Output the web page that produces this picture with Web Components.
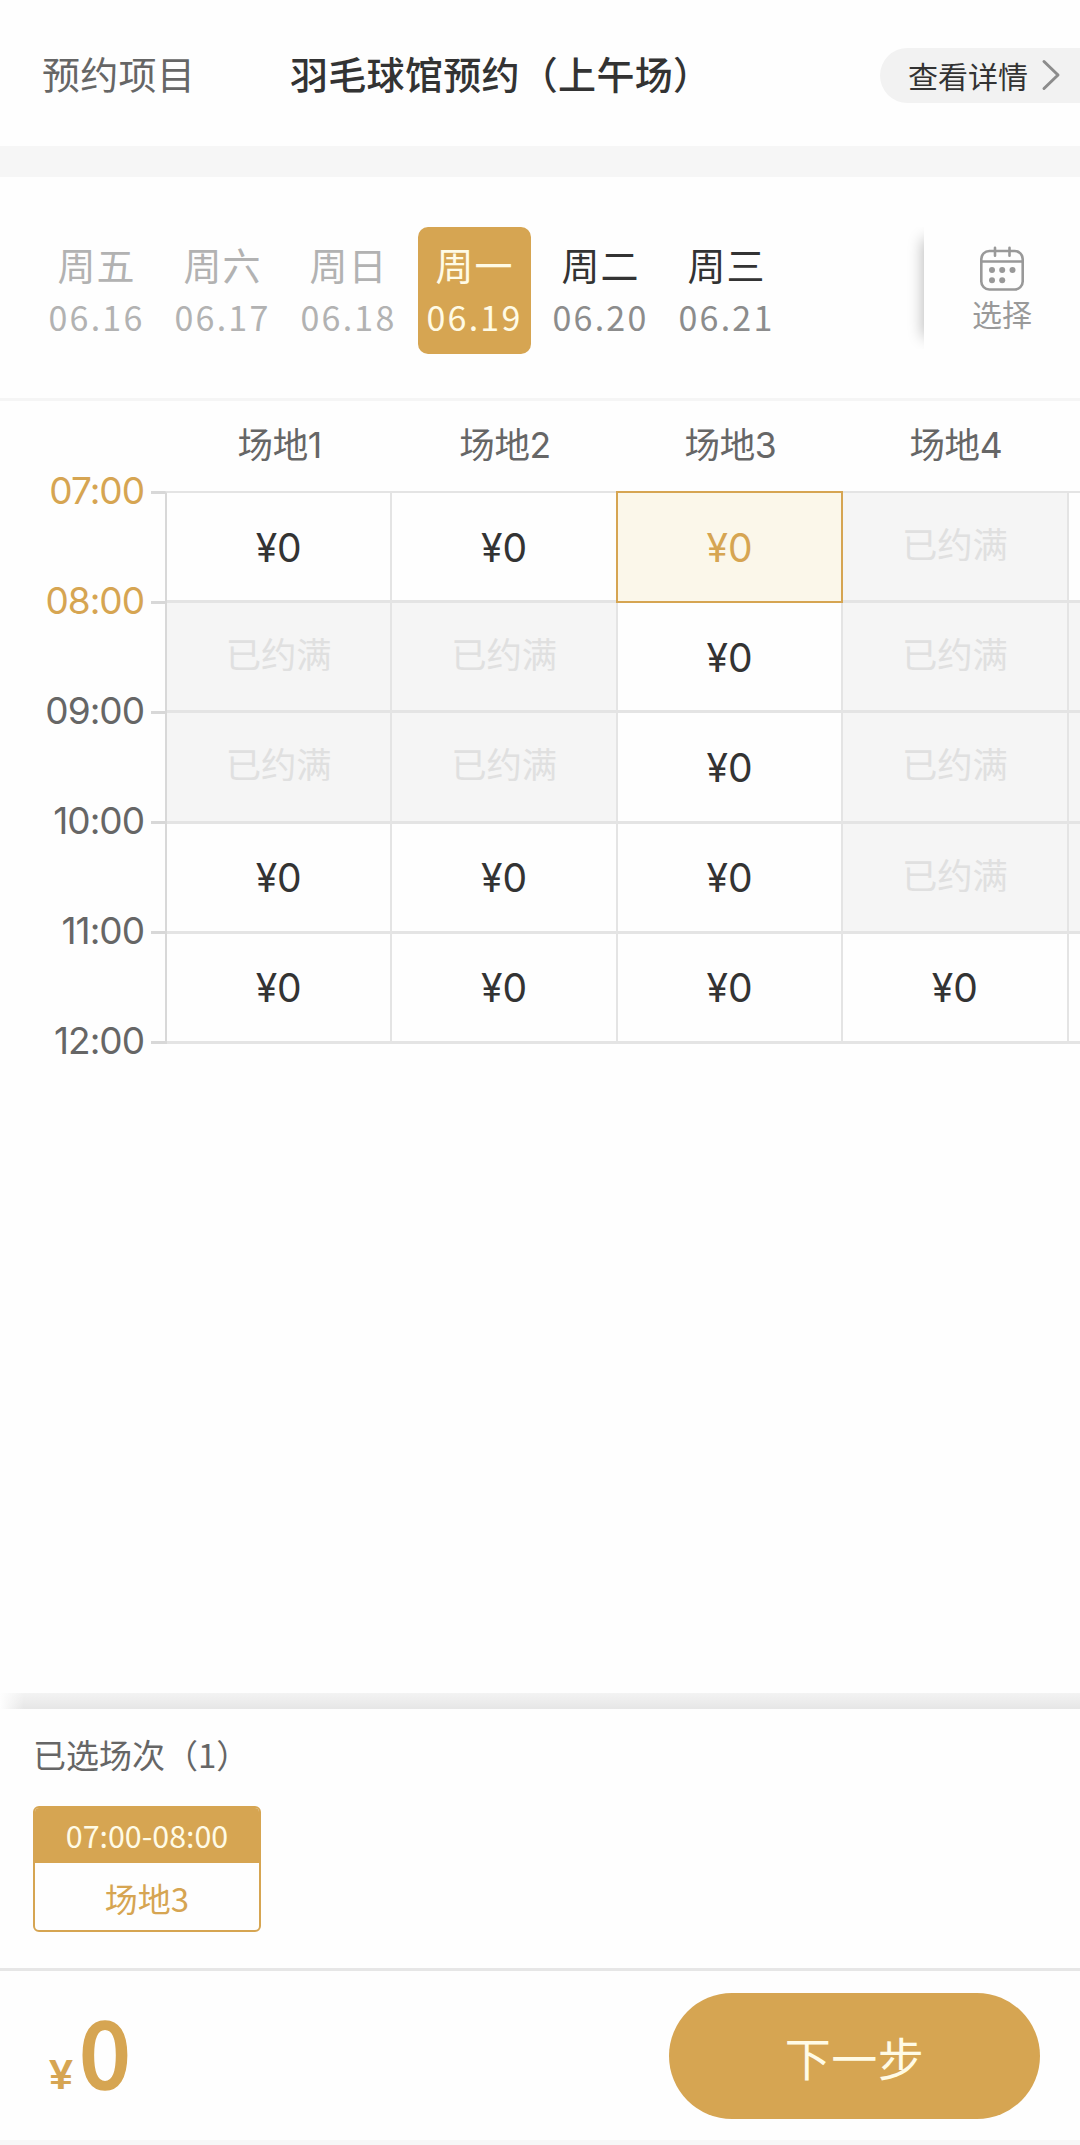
<!DOCTYPE html>
<html lang="zh-CN">
<head>
<meta charset="utf-8">
<title>羽毛球馆预约</title>
<style>
    :root{
        --gold: #d6a552;
        --line: #e4e4e4;
        --tick: #d8d8d8;
        --full: #f5f5f5;
    }
    body{
        margin: 0;
        width: 1080px;
        height: 2145px;
        overflow: hidden;
        background: #fefefe;
        font-family: "Noto Sans CJK SC", "Noto Sans", sans-serif;
        color: #333;
    }
</style>
</head>
<body>
<booking-page>
    <booking-header slot="header" label="预约项目" link="查看详情">羽毛球馆预约（上午场）</booking-header>
    <date-strip slot="dates">
        <date-tab day="周五" date="06.16" past></date-tab>
        <date-tab day="周六" date="06.17" past></date-tab>
        <date-tab day="周日" date="06.18" past></date-tab>
        <date-tab day="周一" date="06.19" active></date-tab>
        <date-tab day="周二" date="06.20"></date-tab>
        <date-tab day="周三" date="06.21"></date-tab>
    </date-strip>
    <court-grid slot="grid"></court-grid>
    <selected-list slot="footer" label="已选场次（1）">
        <selected-slot time="07:00-08:00">场地3</selected-slot>
    </selected-list>
    <pay-bar slot="footer" amount="0">下一步</pay-bar>
</booking-page>

<script>
class BookingPage extends HTMLElement{
    constructor(){
        super()
        this.attachShadow({mode: 'open'})
        this.shadowRoot.innerHTML = `
            <style>
                :host{
                    display: flex;
                    flex-direction: column;
                    height: 2145px;
                }
                #main{
                    flex: 1;
                }
            </style>
            <slot name="header"></slot>
            <slot name="dates"></slot>
            <div id="main"><slot name="grid"></slot></div>
            <slot name="footer"></slot>
        `
    }
}

class BookingHeader extends HTMLElement{
    constructor(){
        super()
        this.attachShadow({mode: 'open'})
        this.shadowRoot.innerHTML = `
            <style>
                :host{
                    display: flex;
                    align-items: center;
                    box-sizing: border-box;
                    height: 177px;
                    padding: 5px 0 0 42px;
                    border-bottom: 31px solid #f6f6f6;
                    font-size: 38px;
                    letter-spacing: .3px;
                }
                #label, #title{
                    padding-bottom: 6px;
                }
                #label{
                    width: 248px;
                    color: #666;
                }
                #title{
                    flex: 1;
                    font-weight: 500;
                }
                #link{
                    display: flex;
                    align-items: center;
                    box-sizing: border-box;
                    width: 200px;
                    height: 55px;
                    padding-left: 28px;
                    gap: 13px;
                    border-radius: 28px 0 0 28px;
                    background: #f2f2f2;
                    font-size: 30px;
                    letter-spacing: 0;
                }
                #link span, #link svg{
                    margin-bottom: 2px;
                }
            </style>
            <span id="label"></span>
            <span id="title"><slot></slot></span>
            <div id="link">
                <span></span>
                <svg width="20" height="32" viewBox="0 0 20 32" fill="none" stroke="#8c8c8c" stroke-width="3" stroke-linecap="round" stroke-linejoin="round"><path d="M3 2.5 17 16 3 29.5"/></svg>
            </div>
        `
    }
    connectedCallback(){
        this.shadowRoot.querySelector('#label').textContent = this.getAttribute('label')
        this.shadowRoot.querySelector('#link span').textContent = this.getAttribute('link')
    }
}

class DateStrip extends HTMLElement{
    constructor(){
        super()
        this.attachShadow({mode: 'open'})
        this.shadowRoot.innerHTML = `
            <style>
                :host{
                    display: flex;
                    box-sizing: border-box;
                    height: 224px;
                    border-bottom: 3px solid #f5f5f5;
                }
                #tabs{
                    display: flex;
                    flex: 1;
                    gap: 13px;
                    padding: 50px 0 0 40px;
                    overflow: hidden;
                }
                #shade{
                    width: 24px;
                    height: 122px;
                    margin-top: 50px;
                    overflow: hidden;
                }
                #shade i{
                    display: block;
                    width: 30px;
                    height: 96px;
                    margin: 13px 0 0 24px;
                    box-shadow: 0 0 15px 1px rgba(0,0,0,.28);
                }
                #pick{
                    display: flex;
                    flex-direction: column;
                    align-items: center;
                    width: 156px;
                    padding-top: 68px;
                    font-size: 30px;
                    line-height: 40px;
                    color: #999;
                }
            </style>
            <div id="tabs"><slot></slot></div>
            <div id="shade"><i></i></div>
            <div id="pick">
                <svg width="46" height="48" viewBox="0 0 46 48" fill="none" stroke="#999" stroke-width="2.6" stroke-linecap="round">
                    <rect x="2.3" y="6" width="41.4" height="38.5" rx="8"/>
                    <path d="M2.3 16.5h41.4M16 2.7v8M30.5 2.7v8"/>
                    <g fill="#999" stroke="none">
                        <circle cx="13" cy="25" r="3"/><circle cx="23.2" cy="25" r="3"/><circle cx="33.5" cy="25" r="3"/>
                        <circle cx="13" cy="35.3" r="3"/><circle cx="23.2" cy="35.3" r="3"/>
                    </g>
                </svg>
                <span>选择</span>
            </div>
        `
    }
}

class DateTab extends HTMLElement{
    constructor(){
        super()
        this.attachShadow({mode: 'open'})
        this.shadowRoot.innerHTML = `
            <style>
                :host{
                    display: flex;
                    flex-direction: column;
                    align-items: center;
                    box-sizing: border-box;
                    width: 113px;
                    height: 127px;
                    padding-top: 9px;
                    border-radius: 10px;
                }
                #day{
                    font-size: 38px;
                    line-height: 56px;
                    letter-spacing: 1px;
                }
                #date{
                    font-size: 34px;
                    line-height: 50px;
                    letter-spacing: 2.2px;
                    color: #8c8c8c;
                }
                :host([past]) #day,
                :host([past]) #date{
                    color: #b2b2b2;
                }
                :host([active]){
                    background: var(--gold);
                }
                :host([active]) #day,
                :host([active]) #date{
                    color: #fffbe6;
                }
            </style>
            <span id="day"></span>
            <span id="date"></span>
        `
    }
    connectedCallback(){
        this.shadowRoot.querySelector('#day').textContent  = this.getAttribute('day')
        this.shadowRoot.querySelector('#date').textContent = this.getAttribute('date')
    }
}

class CourtCell extends HTMLElement{
    constructor(){
        super()
        this.attachShadow({mode: 'open'})
        this.shadowRoot.innerHTML = `
            <style>
                :host{
                    display: flex;
                    align-items: center;
                    justify-content: center;
                    box-sizing: border-box;
                    padding-top: 2px;
                    border-right: 2px solid var(--line);
                    border-bottom: 3px solid var(--line);
                    font: 39px/50px Inter, sans-serif;
                }
                :host([full]){
                    padding: 0 0 7px;
                    background: var(--full);
                    color: #e0e0e0;
                    font: 35.3px/50px "Noto Sans CJK SC", sans-serif;
                }
                :host([selected]){
                    margin: -2px 0 0 -2px;
                    border: 2px solid var(--gold);
                    background: #fbf7ea;
                    color: var(--gold);
                    z-index: 1;
                }
            </style>
            <slot></slot>
        `
    }
}

class CourtGrid extends HTMLElement{
    constructor(){
        super()
        this.attachShadow({mode: 'open'})
        this.shadowRoot.innerHTML = `
            <style>
                :host{
                    display: flex;
                    height: 740px;
                    overflow: hidden;
                }
                #times{
                    display: flex;
                    flex: none;
                    flex-direction: column;
                    width: 165px;
                    padding-top: 62px;
                }
                #times div{
                    display: flex;
                    align-items: center;
                    justify-content: flex-end;
                    gap: 7px;
                    height: 55px;
                    margin-bottom: 55px;
                    font: 37px/55px Inter, sans-serif;
                    letter-spacing: -1px;
                    color: #666;
                }
                #times div.on{
                    color: var(--gold);
                }
                #times span{
                    margin-bottom: 1px;
                }
                #times i{
                    width: 14px;
                    height: 3px;
                    margin-top: 3px;
                    background: var(--tick);
                }
                #board{
                    flex: none;
                }
                #names, #cells{
                    display: grid;
                    grid-template-columns: repeat(5, 225.4px);
                }
                #names{
                    height: 90px;
                    padding-left: 2px;
                    line-height: 89px;
                    text-align: center;
                    font-family: Inter, "Noto Sans CJK SC", sans-serif;
                    font-size: 35.5px;
                    letter-spacing: -.4px;
                    color: #666;
                }
                #cells{
                    grid-template-rows: repeat(5, 110.2px);
                    border-top: 2px solid var(--line);
                    border-left: 2px solid var(--tick);
                }
            </style>
            <div id="times"></div>
            <div id="board">
                <div id="names"></div>
                <div id="cells"></div>
            </div>
        `
        this._times  = ['07:00', '08:00', '09:00', '10:00', '11:00', '12:00']
        this._courts = ['场地1', '场地2', '场地3', '场地4', '']
        // o = open, x = full, s = selected, - / # = clipped fifth court
        this._rows   = ['oosx-', 'xxox#', 'xxox#', 'ooox#', 'oooo-']
    }
    connectedCallback(){
        const $ = (s) => this.shadowRoot.querySelector(s)
        $('#times').innerHTML = this._times.map((t, i) => `<div class="${i < 2 ? 'on' : ''}"><span>${t}</span><i></i></div>`).join('')
        $('#names').innerHTML = this._courts.map(c => `<span>${c}</span>`).join('')
        const kinds = {
            'o': '<court-cell>¥0</court-cell>',
            'x': '<court-cell full>已约满</court-cell>',
            's': '<court-cell selected>¥0</court-cell>',
            '-': '<court-cell></court-cell>',
            '#': '<court-cell full></court-cell>'
        }
        $('#cells').innerHTML = this._rows.map(r => [...r].map(k => kinds[k]).join('')).join('')
    }
}

class SelectedList extends HTMLElement{
    constructor(){
        super()
        this.attachShadow({mode: 'open'})
        this.shadowRoot.innerHTML = `
            <style>
                :host{
                    display: block;
                    box-sizing: border-box;
                    height: 278px;
                    border-bottom: 3px solid #e6e6e6;
                }
                #shadow{
                    height: 16px;
                    background: linear-gradient(90deg, #fefefe, rgba(254,254,254,0) 24px), linear-gradient(#f3f3f3, #e6e6e6);
                }
                #label{
                    padding: 21px 0 0 33px;
                    font-size: 33px;
                    line-height: 48px;
                    color: #666;
                }
                #list{
                    display: flex;
                    padding: 28px 33px 0;
                }
            </style>
            <div id="shadow"></div>
            <div id="label"></div>
            <div id="list"><slot></slot></div>
        `
    }
    connectedCallback(){
        this.shadowRoot.querySelector('#label').textContent = this.getAttribute('label')
    }
}

class SelectedSlot extends HTMLElement{
    constructor(){
        super()
        this.attachShadow({mode: 'open'})
        this.shadowRoot.innerHTML = `
            <style>
                :host{
                    display: block;
                    box-sizing: border-box;
                    width: 228px;
                    height: 126px;
                    border: 2px solid var(--gold);
                    border-radius: 6px;
                    text-align: center;
                    overflow: hidden;
                }
                #time{
                    height: 55px;
                    background: var(--gold);
                    color: #fffbe6;
                    font-size: 30.4px;
                    line-height: 55px;
                }
                #court{
                    color: var(--gold);
                    font-size: 33px;
                    line-height: 70px;
                }
            </style>
            <div id="time"></div>
            <div id="court"><slot></slot></div>
        `
    }
    connectedCallback(){
        this.shadowRoot.querySelector('#time').textContent = this.getAttribute('time')
    }
}

class PayBar extends HTMLElement{
    constructor(){
        super()
        this.attachShadow({mode: 'open'})
        this.shadowRoot.innerHTML = `
            <style>
                :host{
                    display: flex;
                    justify-content: space-between;
                    box-sizing: border-box;
                    height: 174px;
                    padding: 22px 40px 0 49px;
                    border-bottom: 5px solid #f7f7f7;
                }
                #price{
                    display: flex;
                    align-items: baseline;
                    gap: 6px;
                    color: var(--gold);
                    font-size: 43px;
                    line-height: 113px;
                }
                #price span{
                    padding-bottom: 2px;
                    font-family: "Liberation Sans", sans-serif;
                    font-weight: 700;
                }
                #price b{
                    font-size: 91px;
                    font-weight: 500;
                    -webkit-text-stroke: 1.5px var(--gold);
                }
                button{
                    width: 371px;
                    height: 126px;
                    padding: 0;
                    border: 0;
                    border-radius: 63px;
                    background: var(--gold);
                    color: #fffbe6;
                    font: 46px/126px "Noto Sans CJK SC", sans-serif;
                    letter-spacing: .5px;
                }
            </style>
            <div id="price"><span>¥</span><b></b></div>
            <button><slot></slot></button>
        `
    }
    connectedCallback(){
        this.shadowRoot.querySelector('b').textContent = this.getAttribute('amount')
    }
}

customElements.define('booking-page', BookingPage)
customElements.define('booking-header', BookingHeader)
customElements.define('date-strip', DateStrip)
customElements.define('date-tab', DateTab)
customElements.define('court-cell', CourtCell)
customElements.define('court-grid', CourtGrid)
customElements.define('selected-list', SelectedList)
customElements.define('selected-slot', SelectedSlot)
customElements.define('pay-bar', PayBar)
</script>
</body>
</html>
